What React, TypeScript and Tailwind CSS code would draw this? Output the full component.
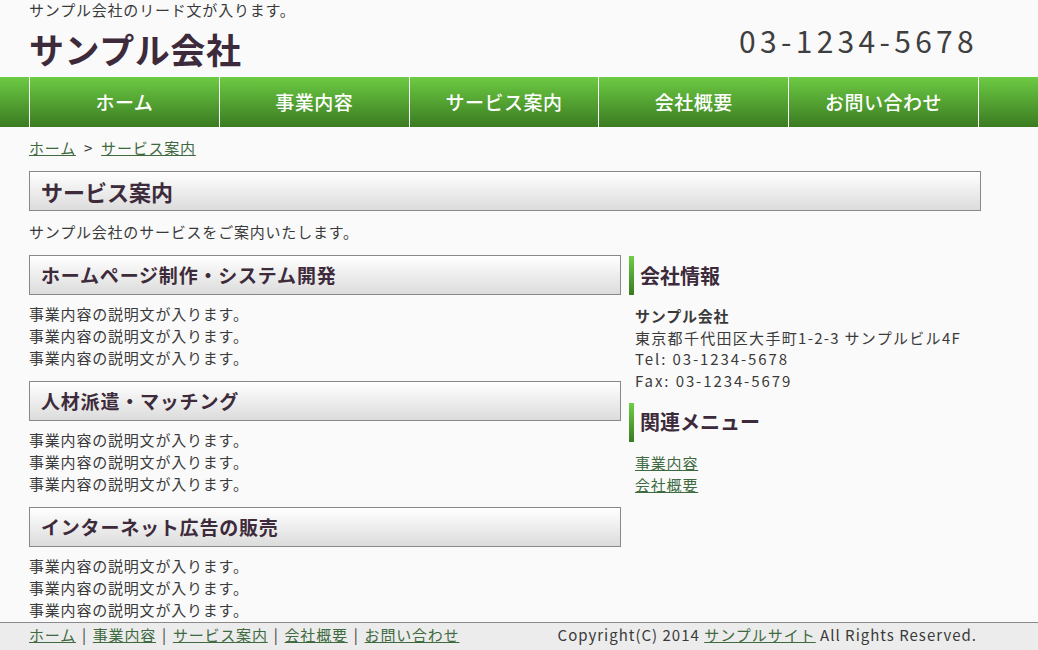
const NAV = ['ホーム', '事業内容', 'サービス案内', '会社概要', 'お問い合わせ']

const SECTIONS = ['ホームページ制作・システム開発', '人材派遣・マッチング', 'インターネット広告の販売']

function SectionHead({ children }: { children: React.ReactNode }) {
  return (
    <h3 className="flex h-[40px] items-center border border-[#888] bg-linear-to-b from-white to-[#dcdcdc] pl-[11px] text-[19px] font-bold tracking-[0.8px] text-[#3d2b3b]">
      {children}
    </h3>
  )
}

function SideHead({ children }: { children: React.ReactNode }) {
  return (
    <div className="flex h-[39px] items-stretch">
      <div className="w-[5px] bg-linear-to-b from-[#6fcf45] to-[#3a7a22]" />
      <h3 className="flex items-center pl-[6px] text-[20px] font-bold tracking-normal text-[#3d2b3b]">{children}</h3>
    </div>
  )
}

export default function App() {
  return (
    <div className="min-h-[650px] bg-[#fafafa] font-['Noto_Sans_CJK_JP','Noto_Sans',sans-serif] text-[15px] tracking-[0.8px] text-[#3a3a3a]">
      {/* header */}
      <header className="ml-[29px] w-[950px]">
        <p className="h-[20px] leading-[20px]">サンプル会社のリード文が入ります。</p>
        <div className="flex h-[57px] items-start justify-between">
          <h1 className="mt-[8px] text-[35px] font-bold leading-[42px] tracking-[0.6px] text-[#3d2b3b]">サンプル会社</h1>
          <p className="mt-[0px] pr-[1px] text-[30px] leading-[40px] tracking-[4.3px] text-[#3f3f3f]">03-1234-5678</p>
        </div>
      </header>

      {/* global nav */}
      <nav className="h-[50px] bg-linear-to-b from-[#6dcb43] to-[#3b7c22]">
        <ul className="ml-[29px] flex h-full w-[950px] border-r border-white">
          {NAV.map((item) => (
            <li
              key={item}
              className="flex w-[190px] items-center justify-center border-l border-white text-[19px] font-medium tracking-[0.5px] text-white"
            >
              {item}
            </li>
          ))}
        </ul>
      </nav>

      {/* main */}
      <main className="ml-[29px] w-[952px]">
        <p className="mt-[10px] leading-[22px]">
          <a className="text-[#3f6a3f] underline">ホーム</a>
          <span className="mx-[8px]">&gt;</span>
          <a className="text-[#3f6a3f] underline">サービス案内</a>
        </p>
        <h2 className="mt-[12px] flex h-[40px] items-center border border-[#888] bg-linear-to-b from-white to-[#dcdcdc] pl-[11px] text-[22px] font-bold tracking-normal text-[#3d2b3b]">
          サービス案内
        </h2>
        <p className="mt-[10px] leading-[22px]">サンプル会社のサービスをご案内いたします。</p>

        <div className="mt-[12px] flex gap-[8px]">
          <div className="w-[592px]">
            {SECTIONS.map((title, i) => (
              <section key={title} className={i > 0 ? 'mt-[12px]' : ''}>
                <SectionHead>{title}</SectionHead>
                <div className="mt-[8px] leading-[22px]">
                  <p>事業内容の説明文が入ります。</p>
                  <p>事業内容の説明文が入ります。</p>
                  <p>事業内容の説明文が入ります。</p>
                </div>
              </section>
            ))}
          </div>

          <aside className="flex-1 pt-[1px]">
            <SideHead>会社情報</SideHead>
            <div className="mt-[10px] pl-[6px] leading-[21.7px]">
              <p className="font-bold">サンプル会社</p>
              <p className="tracking-[1.3px]">東京都千代田区大手町1-2-3 サンプルビル4F</p>
              <p className="tracking-[1.9px]">Tel: 03-1234-5678</p>
              <p className="tracking-[1.9px]">Fax: 03-1234-5679</p>
            </div>
            <div className="mt-[11px]">
              <SideHead>関連メニュー</SideHead>
            </div>
            <ul className="mt-[10px] pl-[6px] leading-[22px]">
              <li>
                <a className="text-[#3f6a3f] underline">事業内容</a>
              </li>
              <li>
                <a className="text-[#3f6a3f] underline">会社概要</a>
              </li>
            </ul>
          </aside>
        </div>
      </main>

      {/* footer */}
      <footer className="mt-[1px] h-[30px] border-t border-[#8a8a8a] bg-[#ececec]">
        <div className="ml-[29px] flex w-[950px] items-center justify-between pt-[1px] leading-[22px]">
          <p>
            <a className="text-[#3f6a3f] underline">ホーム</a>
            <span className="mx-[6px]">|</span>
            <a className="text-[#3f6a3f] underline">事業内容</a>
            <span className="mx-[6px]">|</span>
            <a className="text-[#3f6a3f] underline">サービス案内</a>
            <span className="mx-[6px]">|</span>
            <a className="text-[#3f6a3f] underline">会社概要</a>
            <span className="mx-[6px]">|</span>
            <a className="text-[#3f6a3f] underline">お問い合わせ</a>
          </p>
          <p className="pr-[2px] tracking-[1px]">
            Copyright(C) 2014 <a className="text-[#3f6a3f] underline">サンプルサイト</a> All Rights Reserved.
          </p>
        </div>
      </footer>
    </div>
  )
}
